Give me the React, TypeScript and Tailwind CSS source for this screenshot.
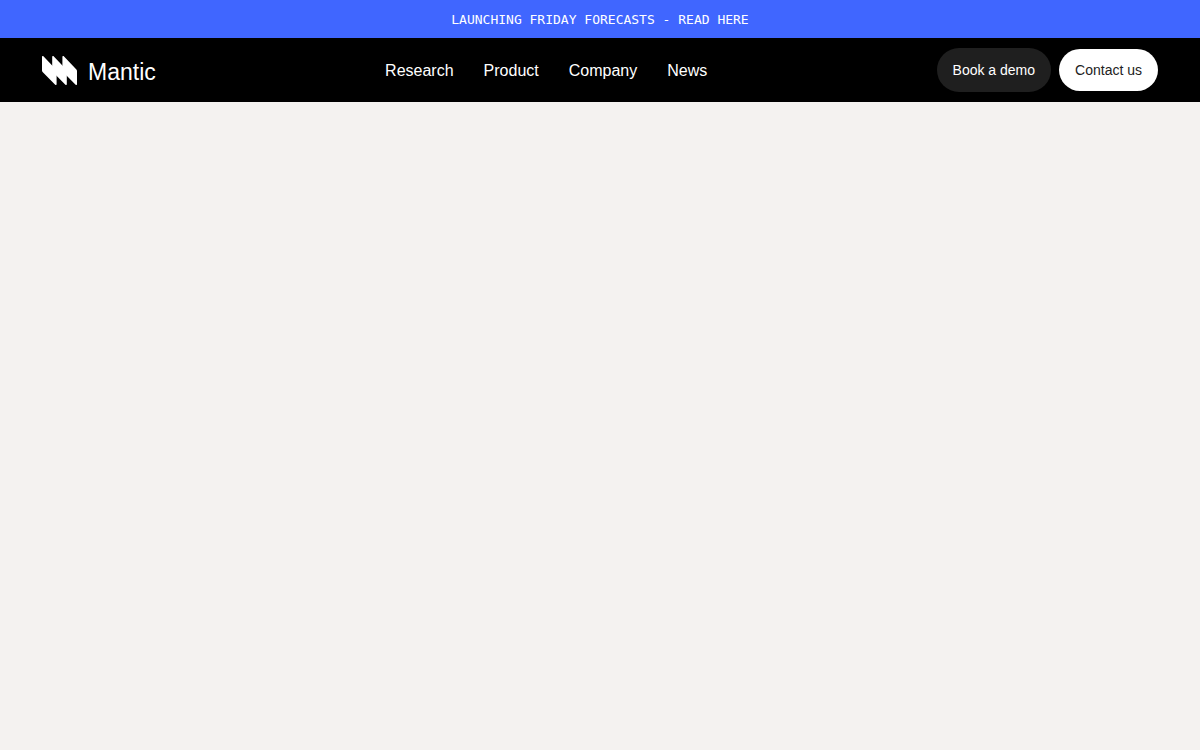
import React from 'react';

const navLinks = [
    { label: 'Research', href: '#research' },
    { label: 'Product', href: '#product' },
    { label: 'Company', href: '#company' },
    { label: 'News', href: '#news' },
];

// one slanted blade, repeated three times
const bladeOffsets = [0, 10.2, 20.4];

const LogoMark: React.FC = () => (
    <svg width="35" height="29" viewBox="0 0 35 29" fill="currentColor" aria-hidden="true">
        {bladeOffsets.map((x) => (
            <path
                key={x}
                transform={`translate(${x} 0)`}
                d="M0 .8C0 0 .9-.3 1.4.3L14 13.5c.4.4.6.9.6 1.5v13.2c0 .8-.9 1.1-1.4.6L.6 16C.2 15.6 0 15.1 0 14.5Z"
            />
        ))}
    </svg>
);

const App: React.FC = () => {
    return (
        <div className="min-h-screen bg-[#f4f2f0] font-['Liberation_Sans',Arial,sans-serif]">
            <a
                href="#friday-forecasts"
                className="flex items-center justify-center bg-[#4066ff] pt-2.5 pb-2 text-white font-['DejaVu_Sans_Mono',monospace] text-[13px] leading-5 uppercase"
            >
                Launching Friday Forecasts - Read here
            </a>
            <header className="flex h-16 items-center justify-between bg-black px-[42px] text-white">
                <a href="#home" className="flex items-center gap-[11px]">
                    <LogoMark />
                    <span className="pt-1 text-[23px] leading-7">Mantic</span>
                </a>
                <nav className="flex items-center gap-[30px] pt-0.5 text-base">
                    {navLinks.map((link) => (
                        <a key={link.label} href={link.href} className="hover:opacity-70">
                            {link.label}
                        </a>
                    ))}
                </nav>
                <div className="flex items-center gap-2 text-sm">
                    <button type="button" className="h-11 rounded-full bg-[#1f1f1f] px-4 text-white">
                        Book a demo
                    </button>
                    <button type="button" className="h-[42px] rounded-full bg-white px-4 text-[#222222]">
                        Contact us
                    </button>
                </div>
            </header>
        </div>
    );
};

export default App;
